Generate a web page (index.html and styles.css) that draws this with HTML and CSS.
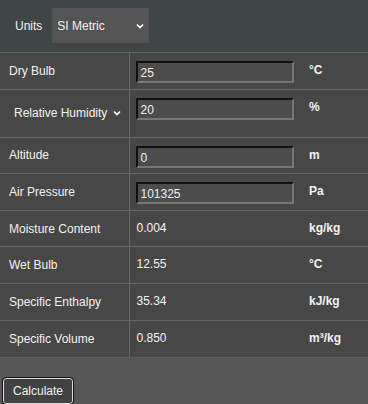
FILE: index.html
```html
<!DOCTYPE html>
<html>
<head>
<meta charset="utf-8">
<link rel="stylesheet" href="styles.css">
</head>
<body>
<div class="topbar">
  <label class="units-label">Units</label>
  <div class="select-wrap units-select">
    <span>SI Metric</span>
    <svg class="chev" width="8" height="6" viewBox="0 0 8 6"><path d="M1 1.5 L4 4.5 L7 1.5" fill="none" stroke="#fff" stroke-width="1.6"/></svg>
  </div>
</div>
<table class="grid">
  <tr>
    <td class="lbl">Dry Bulb</td>
    <td class="val"><div class="inp">25</div></td>
    <td class="unit">°C</td>
  </tr>
  <tr class="tall">
    <td class="lbl"><div class="select-wrap rh-select"><span>Relative Humidity</span><svg class="chev" width="8" height="6" viewBox="0 0 8 6"><path d="M1 1.5 L4 4.5 L7 1.5" fill="none" stroke="#fff" stroke-width="1.6"/></svg></div></td>
    <td class="val"><div class="inp">20</div></td>
    <td class="unit">%</td>
  </tr>
  <tr>
    <td class="lbl">Altitude</td>
    <td class="val"><div class="inp">0</div></td>
    <td class="unit">m</td>
  </tr>
  <tr>
    <td class="lbl">Air Pressure</td>
    <td class="val"><div class="inp">101325</div></td>
    <td class="unit">Pa</td>
  </tr>
  <tr>
    <td class="lbl">Moisture Content</td>
    <td class="val out">0.004</td>
    <td class="unit">kg/kg</td>
  </tr>
  <tr>
    <td class="lbl">Wet Bulb</td>
    <td class="val out">12.55</td>
    <td class="unit">°C</td>
  </tr>
  <tr>
    <td class="lbl">Specific Enthalpy</td>
    <td class="val out">35.34</td>
    <td class="unit">kJ/kg</td>
  </tr>
  <tr>
    <td class="lbl">Specific Volume</td>
    <td class="val out">0.850</td>
    <td class="unit">m³/kg</td>
  </tr>
</table>
<div class="footer">
  <button class="calc">Calculate</button>
</div>
</body>
</html>
```
FILE: styles.css
```css
html, body {
  margin: 0;
  padding: 0;
}
body {
  width: 368px;
  height: 404px;
  background: #575757;
  color: #f2f2f2;
  font-family: "Liberation Sans", Arial, sans-serif;
  font-size: 12px;
  overflow: hidden;
}
.topbar {
  height: 52px;
  box-sizing: border-box;
  background: #404545;
  display: flex;
  align-items: center;
  padding-left: 15px;
  gap: 10px;
}
.select-wrap {
  display: flex;
  align-items: center;
  justify-content: space-between;
  box-sizing: border-box;
  white-space: nowrap;
}
.units-select {
  width: 97px;
  height: 35px;
  background: #545454;
  padding: 0 5px 0 5px;
  margin-top: -1px;
}
.chev {
  display: block;
  flex: none;
}
.grid {
  width: 368px;
  border-collapse: collapse;
  background: #484748;
}
.grid td {
  border-top: 1px solid #666;
  padding: 8px 0 0 0;
  vertical-align: top;
  box-sizing: border-box;
}
.grid td.lbl {
  width: 129px;
  padding-left: 9px;
  border-right: 1px solid #666;
  vertical-align: middle;
  padding-top: 0;
}
.grid td.val {
  padding-left: 6px;
  width: 172px;
}
.grid td.out {
  padding-left: 7px;
  padding-top: 10px;
}
.grid td.unit {
  font-weight: bold;
  padding-left: 8px;
  padding-top: 10px;
}
.grid tr {
  height: 36.6px;
}
.grid tr.tall {
  height: 48px;
}
.inp {
  width: 158px;
  height: 22px;
  box-sizing: border-box;
  border-style: solid;
  border-width: 2px;
  border-color: #111 #777 #777 #111;
  background: #4c4c4c;
  padding: 3px 0 0 3px;
  line-height: 15px;
}
.rh-select {
  width: 112px;
  height: 32px;
  margin-left: 0;
  padding: 0 0 0 5px;
}
.footer {
  height: 48px;
  background: #575757;
  border-top: 1px solid #5e5e5e;
  padding: 20px 0 0 3px;
  box-sizing: border-box;
}
.calc {
  font-family: "Liberation Sans", Arial, sans-serif;
  font-size: 12px;
  color: #f2f2f2;
  background: #424242;
  border: 1px solid #ddd;
  outline: 1px solid #111;
  border-radius: 3px;
  width: 70px;
  height: 26px;
  padding: 0;
}
```
